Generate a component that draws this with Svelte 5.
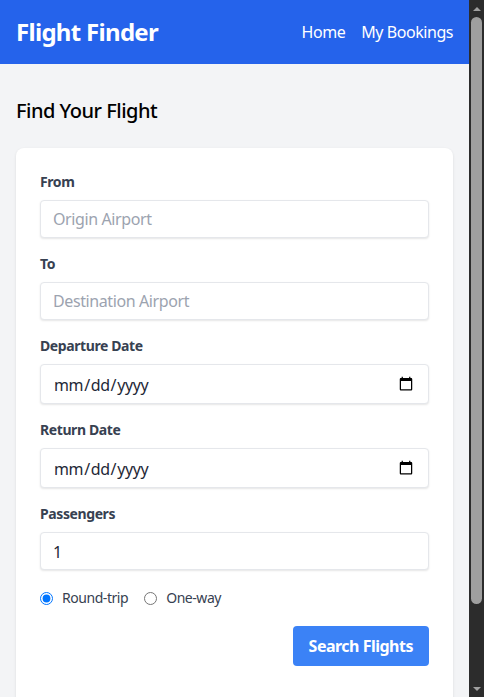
<script>
  let tripType = $state("round");
</script>

<div class="window">
  <div class="page">
    <header class="topbar">
      <h1 class="brand">Flight Finder</h1>
      <nav class="links">
        <a href="#home">Home</a>
        <a href="#bookings">My Bookings</a>
      </nav>
    </header>

    <main class="content">
      <h2 class="title">Find Your Flight</h2>

      <form class="card" onsubmit={(e) => e.preventDefault()}>
        <div class="field">
          <label for="from">From</label>
          <input id="from" type="text" placeholder="Origin Airport" />
        </div>
        <div class="field">
          <label for="to">To</label>
          <input id="to" type="text" placeholder="Destination Airport" />
        </div>
        <div class="field">
          <label for="depart">Departure Date</label>
          <input id="depart" type="date" />
        </div>
        <div class="field">
          <label for="return">Return Date</label>
          <input id="return" type="date" />
        </div>
        <div class="field">
          <label for="passengers">Passengers</label>
          <input id="passengers" class="count" type="number" min="1" value="1" />
        </div>

        <div class="trip">
          <label class="radio">
            <input type="radio" name="trip" value="round" bind:group={tripType} />
            <span>Round-trip</span>
          </label>
          <label class="radio">
            <input type="radio" name="trip" value="oneway" bind:group={tripType} />
            <span>One-way</span>
          </label>
        </div>

        <div class="actions">
          <button class="search" type="submit">Search Flights</button>
        </div>
      </form>
    </main>
  </div>

  <div class="scrollbar" aria-hidden="true">
    <span class="arrow up"></span>
    <span class="track"><span class="thumb"></span></span>
    <span class="arrow down"></span>
  </div>
</div>

<style>
  :global(body) {
    margin: 0;
    overflow: hidden;
  }
  .window {
    display: flex;
    width: 484px;
    height: 697px;
    overflow: hidden;
    font-family: "Noto Sans", "Open Sans", sans-serif;
  }
  .page {
    flex: 1;
    min-width: 0;
    height: 697px;
    overflow: hidden;
    background: #f3f4f6;
  }

  .topbar {
    display: flex;
    align-items: center;
    justify-content: space-between;
    height: 64px;
    padding: 0 16px;
    box-sizing: border-box;
    background: #2563eb;
    color: #fff;
  }
  .brand {
    margin: 0;
    font-size: 24px;
    line-height: 32px;
    font-weight: 700;
    letter-spacing: -0.7px;
  }
  .links {
    display: flex;
    gap: 16px;
  }
  .links a {
    color: #fff;
    text-decoration: none;
    font-size: 16px;
    line-height: 24px;
    letter-spacing: -0.45px;
  }

  .content {
    padding: 33px 16px 0;
  }
  .title {
    margin: 0 0 23px;
    font-size: 20px;
    line-height: 28px;
    font-weight: 500;
    letter-spacing: -0.5px;
    color: #000;
  }

  .card {
    display: flex;
    flex-direction: column;
    gap: 16px;
    padding: 24px 24px 48px;
    background: #fff;
    border-radius: 8px;
    box-shadow: 0 1px 3px rgba(0, 0, 0, 0.1);
  }
  .field label {
    display: block;
    margin-bottom: 8px;
    font-size: 14px;
    line-height: 20px;
    font-weight: 700;
    letter-spacing: -0.4px;
    color: #374151;
  }
  .field input {
    display: block;
    width: 100%;
    box-sizing: border-box;
    padding: 8px 12px;
    font-family: inherit;
    font-size: 16px;
    line-height: 20px;
    letter-spacing: -0.4px;
    color: #1f2937;
    background: #fff;
    border: 1px solid #e5e7eb;
    border-radius: 4px;
    box-shadow: 0 1px 2px rgba(0, 0, 0, 0.1);
  }
  .field input::placeholder {
    color: #9ca3af;
  }
  .field input::-webkit-datetime-edit {
    transform: translateY(1px);
  }
  .field input.count {
    padding: 9px 12px 7px;
  }

  .trip {
    display: flex;
    gap: 16px;
  }
  .radio {
    display: flex;
    align-items: center;
    gap: 9px;
    font-size: 14px;
    line-height: 24px;
    letter-spacing: -0.45px;
    color: #374151;
  }
  .radio input {
    margin: 0;
    width: 13px;
    height: 13px;
  }

  .actions {
    display: flex;
    justify-content: flex-end;
  }
  .search {
    height: 40px;
    padding: 0 16px;
    border: none;
    border-radius: 4px;
    background: #3b82f6;
    color: #fff;
    font-family: inherit;
    font-size: 16px;
    font-weight: 700;
    letter-spacing: -0.5px;
  }

  .scrollbar {
    flex: none;
    display: flex;
    flex-direction: column;
    width: 15px;
    height: 697px;
    background: #2c2c2c;
  }
  .arrow {
    flex: none;
    display: flex;
    align-items: center;
    justify-content: center;
    height: 17px;
  }
  .arrow::before {
    content: "";
    border-left: 4px solid transparent;
    border-right: 4px solid transparent;
  }
  .up::before {
    border-bottom: 4px solid #a0a0a0;
  }
  .down::before {
    border-top: 4px solid #a0a0a0;
  }
  .track {
    flex: 1;
    display: flex;
    flex-direction: column;
    padding: 0 2px;
  }
  .thumb {
    display: block;
    height: 587px;
    background: #9f9f9f;
    border-radius: 6px;
  }
</style>
